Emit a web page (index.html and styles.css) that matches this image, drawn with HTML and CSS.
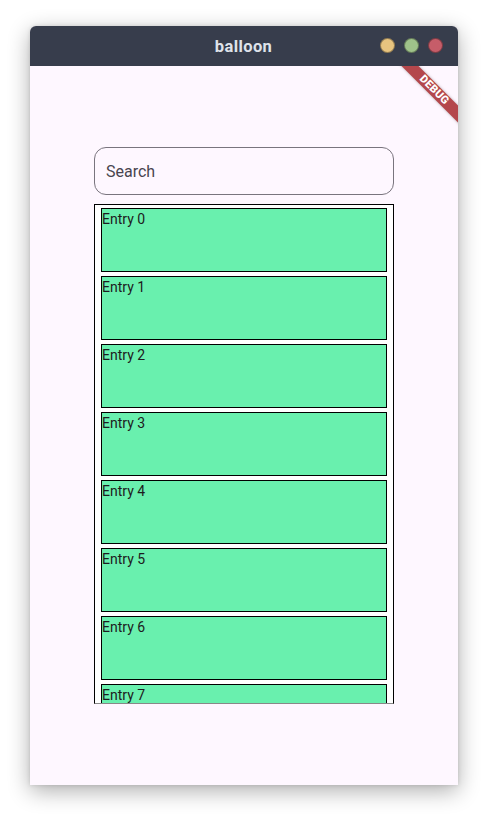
FILE: index.html
```html
<!DOCTYPE html>
<html>
<head>
<meta charset="utf-8">
<link rel="stylesheet" href="styles.css">
</head>
<body>
<div class="window">
  <div class="titlebar">
    <span class="title">balloon</span>
    <div class="lights">
      <span class="light yellow"></span>
      <span class="light green"></span>
      <span class="light red"></span>
    </div>
  </div>
  <div class="content">
    <div class="banner">DEBUG</div>
    <div class="search">Search</div>
    <div class="list">
      <div class="entry">Entry 0</div>
      <div class="entry">Entry 1</div>
      <div class="entry">Entry 2</div>
      <div class="entry">Entry 3</div>
      <div class="entry">Entry 4</div>
      <div class="entry">Entry 5</div>
      <div class="entry">Entry 6</div>
      <div class="entry">Entry 7</div>
    </div>
  </div>
</div>
</body>
</html>
```

FILE: styles.css
```css
html, body {
  margin: 0;
  padding: 0;
  background: #ffffff;
  font-family: Roboto, "Noto Sans", sans-serif;
}
body {
  padding: 26px 30px 34px 30px;
}
.window {
  width: 428px;
  height: 759px;
  display: flex;
  flex-direction: column;
  border-radius: 6px 6px 0 0;
  box-shadow: 0 6px 22px rgba(0,0,0,0.32), 0 0 4px rgba(0,0,0,0.12);
  background: #fef7ff;
}
.titlebar {
  height: 40px;
  flex: none;
  background: #373d4c;
  border-radius: 6px 6px 0 0;
  position: relative;
  display: flex;
  align-items: center;
  justify-content: center;
}
.title {
  color: #dfe3ea;
  font-weight: 700;
  font-size: 16.5px;
  letter-spacing: 0.4px;
  margin-left: -1px;
}
.lights {
  position: absolute;
  right: 15px;
  top: 12px;
  display: flex;
  gap: 9px;
}
.light {
  width: 15px;
  height: 15px;
  border-radius: 50%;
  box-sizing: border-box;
  border: 1px solid rgba(0,0,0,0.35);
}
.yellow { background: #e8c47f; }
.green { background: #9fc28a; }
.red { background: #c65d69; }
.content {
  flex: 1;
  position: relative;
  overflow: hidden;
  padding: 81px 64px 0 64px;
  display: flex;
  flex-direction: column;
  gap: 9px;
}
.banner {
  position: absolute;
  width: 110px;
  height: 12px;
  line-height: 12px;
  right: -31px;
  top: 18px;
  transform: rotate(45deg);
  background: #b4474c;
  color: #ffffff;
  font-size: 11px;
  font-weight: 900;
  text-align: center;
  letter-spacing: 0.2px;
  box-shadow: 0 0 3px rgba(0,0,0,0.3);
}
.search {
  height: 48px;
  box-sizing: border-box;
  border: 1px solid #79747e;
  border-radius: 12px;
  padding: 0 11px;
  display: flex;
  align-items: center;
  font-size: 16px;
  color: #49454f;
}
.list {
  height: 500px;
  box-sizing: border-box;
  border: 1px solid #000;
  border-bottom-color: #888;
  background: #ffffff;
  padding: 3px 6px 0 6px;
  display: flex;
  flex-direction: column;
  gap: 4px;
  overflow: hidden;
}
.entry {
  flex: none;
  height: 64px;
  box-sizing: border-box;
  border: 1px solid #000;
  background: #69f0ae;
  font-size: 14px;
  line-height: 20px;
  color: #1d1b20;
}
```
